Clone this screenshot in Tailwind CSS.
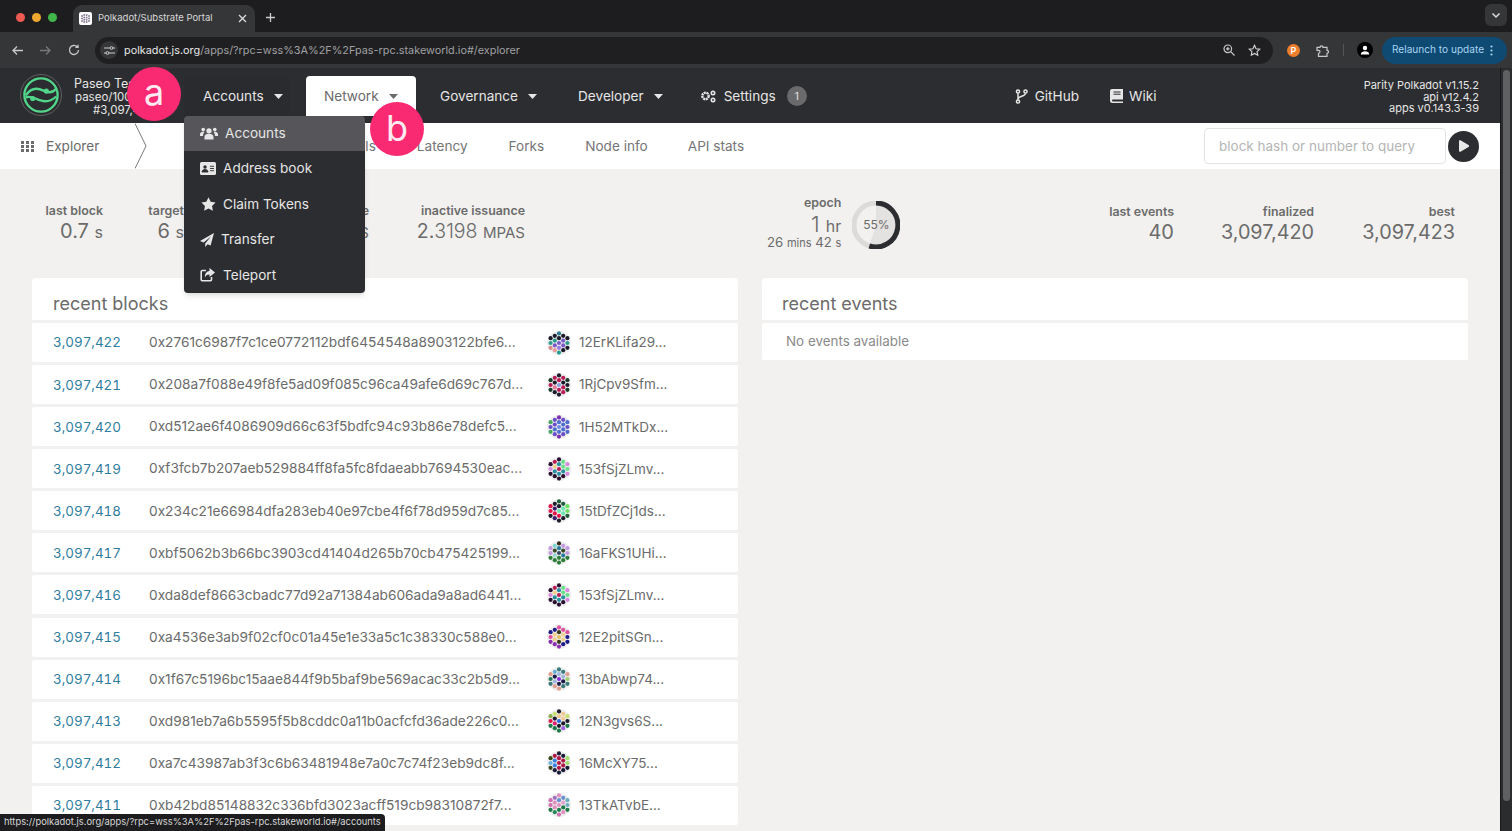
<!DOCTYPE html>
<html>
<head>
<meta charset="utf-8">
<title>Polkadot/Substrate Portal</title>
<script src="https://cdn.jsdelivr.net/npm/@tailwindcss/browser@4"></script>
</head>
<body class="h-[831px] w-[1512px] overflow-hidden bg-[#f2f1ef] font-['Inter',sans-serif] text-[13.6px] text-[#6b6b6b]">
<div class="relative flex h-[831px] w-[1512px] flex-col overflow-hidden">
  <!-- tab strip -->
  <div class="flex h-[32px] shrink-0 items-end bg-[#1d1d1f] pl-[13px]">
    <div class="mb-[10px] flex w-[60px] gap-[7px] pl-[3px]">
      <span class="h-[9px] w-[9px] rounded-full bg-[#ed5a52]"></span>
      <span class="h-[9px] w-[9px] rounded-full bg-[#eea72e]"></span>
      <span class="h-[9px] w-[9px] rounded-full bg-[#3fb54a]"></span>
    </div>
    <div class="flex h-[27px] w-[182px] items-center rounded-t-[9px] bg-[#353638] pl-[6px] pr-[8px]">
      <span class="flex h-[13px] w-[13px] items-center justify-center rounded-[2px] bg-white"><svg width="11" height="11" viewBox="0 0 11 11" fill="#8a7f94"><circle cx="2" cy="3" r="1"/><circle cx="2" cy="5.5" r="1"/><circle cx="2" cy="8" r="1"/><circle cx="4.2" cy="2" r="1"/><circle cx="4.2" cy="4.4" r="1"/><circle cx="4.2" cy="6.7" r="1"/><circle cx="4.2" cy="9" r="1"/><circle cx="6.6" cy="2" r="1"/><circle cx="6.6" cy="4.4" r="1"/><circle cx="6.6" cy="6.7" r="1"/><circle cx="6.6" cy="9" r="1"/><circle cx="9" cy="3" r="1"/><circle cx="9" cy="5.5" r="1"/><circle cx="9" cy="8" r="1"/></svg></span>
      <span class="ml-[6px] flex-1 whitespace-nowrap text-[9.5px] text-[#d8d8d8]">Polkadot/Substrate Portal</span>
      <svg width="9" height="9" viewBox="0 0 9 9" stroke="#ddd" stroke-width="1.3"><path d="M1 1l7 7M8 1l-7 7"/></svg>
    </div>
    <svg class="mb-[9px] ml-[10px]" width="11" height="11" viewBox="0 0 11 11" stroke="#ccc" stroke-width="1.3"><path d="M5.5 1v9M1 5.5h9"/></svg>
    <div class="mb-[6px] ml-auto mr-[5px] flex h-[22px] w-[22px] items-center justify-center rounded-[6px] bg-[#353638]">
      <svg width="10" height="7" viewBox="0 0 10 7" fill="none" stroke="#ddd" stroke-width="1.5"><path d="M1.5 1.5L5 5l3.5-3.5"/></svg>
    </div>
  </div>
  <!-- toolbar -->
  <div class="flex h-[36px] shrink-0 items-center bg-[#353638] pl-[11px] pr-[4px]">
    <svg width="13" height="11" viewBox="0 0 13 11" fill="none" stroke="#c9c9c9" stroke-width="1.3"><path d="M12 5.5H2M6 1.5l-4 4 4 4"/></svg>
    <svg class="ml-[15px]" width="13" height="11" viewBox="0 0 13 11" fill="none" stroke="#77787a" stroke-width="1.3"><path d="M1 5.5h10M7 1.5l4 4-4 4"/></svg>
    <svg class="ml-[16px]" width="12" height="12" viewBox="0 0 12 12" fill="none" stroke="#c9c9c9" stroke-width="1.3"><path d="M10.5 6a4.5 4.5 0 1 1-1.3-3.2M10 .8v2.6H7.4"/></svg>
    <div class="ml-[15px] flex h-[27px] w-[1178px] items-center rounded-full bg-[#1f1f21] pl-[5px] pr-[12px]">
      <span class="flex h-[18px] w-[18px] items-center justify-center rounded-full bg-[#353638]"><svg width="11" height="9" viewBox="0 0 11 9" fill="none" stroke="#ccc" stroke-width="1"><path d="M0 2h6M9 2h2M0 7h2M5 7h6"/><circle cx="7.5" cy="2" r="1.4"/><circle cx="3.5" cy="7" r="1.4"/></svg></span>
      <span class="ml-[6px] whitespace-nowrap text-[10.85px] text-[#9fa0a2]"><span class="text-[#e8e8e8]">polkadot.js.org</span>/apps/?rpc=wss%3A%2F%2Fpas-rpc.stakeworld.io#/explorer</span>
      <svg class="ml-auto" width="12" height="12" viewBox="0 0 12 12" fill="none" stroke="#c9c9c9" stroke-width="1.2"><circle cx="4.8" cy="4.8" r="3.8"/><path d="M7.7 7.7L11.5 11.5M3 4.8h3.6M4.8 3v3.6"/></svg>
      <svg class="ml-[13px]" width="13" height="13" viewBox="0 0 24 24" fill="none" stroke="#d8d8d8" stroke-width="2"><path d="M12 2.5l2.9 6.2 6.8.8-5 4.6 1.3 6.7-6-3.4-6 3.4 1.3-6.7-5-4.6 6.8-.8z"/></svg>
    </div>
    <span class="ml-[14px] flex h-[13px] w-[13px] items-center justify-center rounded-full bg-[#ee7d2c] text-[9px] font-semibold leading-none text-white">P</span>
    <svg class="ml-[16px]" width="13" height="13" viewBox="0 0 13 13" fill="none" stroke="#c9c9c9" stroke-width="1.2"><path d="M1 3h3a1.5 1.5 0 0 1 3 0h4v3a1.5 1.5 0 0 1 0 3v3H2.5V9a1.5 1.5 0 0 0 0-3H1z" transform="translate(0 .3)"/></svg>
    <span class="ml-[14px] h-[12px] w-px bg-[#555]"></span>
    <span class="ml-[13px] flex h-[16px] w-[16px] items-center justify-center rounded-full bg-black"><svg width="10" height="10" viewBox="0 0 10 10" fill="#fff"><circle cx="5" cy="3" r="2.2"/><path d="M.8 9.5c0-2.4 2-3.2 4.2-3.2s4.2.8 4.2 3.2z"/></svg></span>
    <div class="ml-[9px] flex h-[27px] w-[125px] items-center rounded-full bg-[#0f4a73] pl-[10px] text-[#a8d4f2]">
      <span class="whitespace-nowrap text-[10.1px]">Relaunch to update</span>
      <svg class="ml-[6px]" width="3" height="11" viewBox="0 0 3 11" fill="#a8d4f2"><circle cx="1.5" cy="1.5" r="1.1"/><circle cx="1.5" cy="5.5" r="1.1"/><circle cx="1.5" cy="9.5" r="1.1"/></svg>
    </div>
  </div>
  <div class="flex min-h-0 flex-1">
    <div class="flex min-w-0 flex-1 flex-col">
      <!-- app nav -->
      <div class="flex h-[55px] shrink-0 items-end bg-[#2c2d30] text-[#e6e6e6]">
        <div class="mb-[6px] ml-[20px] flex items-center self-end">
          <svg width="42" height="42" viewBox="0 0 43 43" fill="none"><circle cx="21.5" cy="21.5" r="21" stroke="#777" stroke-width=".7"/><circle cx="21.5" cy="21.5" r="17" stroke="#52d68a" stroke-width="2.4"/><path d="M6 22c5-8 12-8 18-5 4 2 9 3 13-2M6 24c5-2 9 1 15 3 6 2 11 1 16-4" stroke="#52d68a" stroke-width="2.4"/><circle cx="27" cy="17.5" r="2.6" fill="#52d68a"/><circle cx="13" cy="25" r="2.6" fill="#52d68a"/></svg>
          <div class="ml-[12px] w-[70px] whitespace-nowrap pt-[4px] text-[11.5px] leading-[13px]"><div class="text-[12.5px] leading-[15px]">Paseo Testnet</div><div class="pl-[1px]">paseo/1003</div><div class="pl-[19px]">#3,097,423</div></div>
        </div>
        <div class="ml-[40px] flex h-[47px] w-[105px] items-center gap-[10px] rounded-t-[4px] bg-[#2a2b2e] pb-[7px] pl-[19px]">Accounts <svg width="9" height="5" viewBox="0 0 9 5" fill="#e6e6e6"><path d="M0 0h9L4.5 5z"/></svg></div>
        <div class="mb-[7px] ml-[17px] flex h-[40px] w-[110px] items-center gap-[10px] rounded-t-[4px] bg-white pl-[18px] text-[#6b6b6b]">Network <svg width="9" height="5" viewBox="0 0 9 5" fill="#6b6b6b"><path d="M0 0h9L4.5 5z"/></svg></div>
        <div class="mb-[7px] ml-[24px] flex h-[40px] items-center gap-[10px]">Governance <svg width="9" height="5" viewBox="0 0 9 5" fill="#e6e6e6"><path d="M0 0h9L4.5 5z"/></svg></div>
        <div class="mb-[7px] ml-[41px] flex h-[40px] items-center gap-[10px]">Developer <svg width="9" height="5" viewBox="0 0 9 5" fill="#e6e6e6"><path d="M0 0h9L4.5 5z"/></svg></div>
        <div class="mb-[7px] ml-[37px] flex h-[40px] items-center">
          <svg width="17" height="13" viewBox="0 0 17 13" fill="#e6e6e6"><circle cx="5.5" cy="6" r="3.2" fill="none" stroke="#e6e6e6" stroke-width="2.4" stroke-dasharray="2 .6"/><circle cx="13" cy="3" r="1.7" fill="none" stroke="#e6e6e6" stroke-width="1.6"/><circle cx="13" cy="10" r="1.7" fill="none" stroke="#e6e6e6" stroke-width="1.6"/></svg>
          <span class="ml-[7px]">Settings</span>
          <span class="ml-[11px] flex h-[20px] w-[20px] items-center justify-center rounded-full bg-[#6a6a6c] text-[10px] text-[#e6e6e6]">1</span>
        </div>
        <div class="mb-[7px] ml-[208px] flex h-[40px] items-center">
          <svg width="13" height="15" viewBox="0 0 13 15" fill="none" stroke="#e6e6e6" stroke-width="1.5"><circle cx="3" cy="2.5" r="1.6"/><circle cx="3" cy="12.5" r="1.6"/><circle cx="10.5" cy="2.5" r="1.6"/><path d="M3 4.2v6.6M10.5 4.2c0 3.5-7.5 2.5-7.5 6"/></svg>
          <span class="ml-[7px]">GitHub</span>
        </div>
        <div class="mb-[7px] ml-[31px] flex h-[40px] items-center">
          <svg width="13" height="14" viewBox="0 0 13 14" fill="#e6e6e6"><path d="M2 0h11v10.5H3a1 1 0 0 0 0 2h10V14H2.5A2.5 2.5 0 0 1 0 11.5V2a2 2 0 0 1 2-2z"/><path d="M3.5 3h7M3.5 5.2h7" stroke="#2c2d30" stroke-width="1"/></svg>
          <span class="ml-[6px]">Wiki</span>
        </div>
        <div class="mb-[8px] ml-auto mr-[21px] text-right text-[11px] leading-[11.7px]"><div>Parity Polkadot v1.15.2</div><div>api v12.4.2</div><div>apps v0.143.3-39</div></div>
      </div>
      <!-- sub nav -->
      <div class="flex h-[46px] shrink-0 items-center bg-white pl-[21px] pr-[21px] text-[#757575]">
        <svg width="14" height="11" viewBox="0 0 14 11" fill="#6b6b6b"><path d="M0 0h3v3H0zM5 0h3v3H5zM10 0h3v3h-3zM0 4h3v3H0zM5 4h3v3H5zM10 4h3v3h-3zM0 8h3v3H0zM5 8h3v3H5zM10 8h3v3h-3z"/></svg>
        <span class="ml-[11px] text-[#6b6b6b]">Explorer</span>
        <svg class="ml-[36px]" width="13" height="46" viewBox="0 0 13 45" fill="none" stroke="#555" stroke-width=".8"><path d="M0 0l11 22.5L0 45"/></svg>
        <span class="ml-[146px]">Block details</span>
        <span class="ml-[41px]">Latency</span>
        <span class="ml-[41px]">Forks</span>
        <span class="ml-[41px]">Node info</span>
        <span class="ml-[40px]">API stats</span>
        <span class="ml-auto flex h-[36px] w-[242px] items-center rounded-[4px] border border-[#e3e3e3] pl-[14px] text-[13.5px] text-[#b5b5b5]">block hash or number to query</span>
        <span class="ml-[2px] flex h-[31px] w-[31px] items-center justify-center rounded-full bg-[#2c2d30]"><svg width="11" height="12" viewBox="0 0 11 12" fill="#e8e8e8"><path d="M1 1.2v9.6a1 1 0 0 0 1.5.9l8-4.8a1 1 0 0 0 0-1.8l-8-4.8A1 1 0 0 0 1 1.2z"/></svg></span>
      </div>
      <!-- summary -->
      <div class="flex h-[109px] shrink-0 items-center pl-[32px] pr-[45px]">
        <div class="w-[71px] text-right"><div class="text-[12.4px] font-semibold leading-[16px]">last block</div><div class="text-[20px] leading-[24px]">0.7 <span class="text-[16px]">s</span></div></div>
        <div class="ml-[10px] w-[71px] text-right"><div class="text-[12.4px] font-semibold leading-[16px]">target</div><div class="text-[20px] leading-[24px]">6 <span class="text-[16px]">s</span></div></div>
        <div class="ml-[10px] w-[175px] text-right"><div class="text-[12.4px] font-semibold leading-[16px]">total issuance</div><div class="text-[19.5px] leading-[24px]">1.5 <span class="text-[15px]">MPAS</span></div></div>
        <div class="ml-[10px] w-[146px] text-right"><div class="text-[12.4px] font-semibold leading-[16px]">inactive issuance</div><div class="text-[19.5px] leading-[24px]">2.<span class="font-light">3198</span> <span class="text-[15px]">MPAS</span></div></div>
        <div class="mb-[2px] ml-[242px] text-right"><div class="mb-[4px] text-[12.4px] font-semibold leading-[14px]">epoch</div><div class="text-[22px] font-light leading-[20px]">1 <span class="text-[16px] font-normal">hr</span></div><div class="text-[13.2px] leading-[13px]">26 <span class="text-[11px]">mins</span> 42 <span class="text-[11px]">s</span></div></div>
        <div class="relative ml-[11px] mt-[2px] h-[48px] w-[48px]">
          <svg width="48" height="48" viewBox="0 0 48 48" fill="none"><circle cx="24" cy="24" r="22" stroke="#dcdbd9" stroke-width="5"/><path d="M24 24V2A22 22 0 1 1 17.3 45z" fill="#e3e2e0" stroke="none"/><path d="M24 2A22 22 0 1 1 17.3 45" stroke="#2c2d30" stroke-width="5"/></svg>
          <span class="absolute inset-0 flex items-center justify-center text-[12px]">55%</span>
        </div>
        <div class="ml-auto w-[90px] text-right"><div class="text-[12.4px] font-semibold leading-[16px]">last events</div><div class="text-[20px] leading-[24px]">40</div></div>
        <div class="ml-[40px] w-[100px] text-right"><div class="text-[12.4px] font-semibold leading-[16px]">finalized</div><div class="text-[19.8px] leading-[24px]">3,097,420</div></div>
        <div class="ml-[41px] w-[100px] text-right"><div class="text-[12.4px] font-semibold leading-[16px]">best</div><div class="text-[19.8px] leading-[24px]">3,097,423</div></div>
      </div>
      <!-- tables -->
      <div class="flex gap-[24px] pl-[32px] pr-[32px]">
        <div class="w-[706px] shrink-0">
          <div class="mb-[3px] flex h-[42px] items-center rounded-t-[4px] bg-white pl-[21px] pt-[10px] text-[18px] leading-[24px]">recent blocks</div>
          <div class="flex flex-col gap-[3.09px]">
            <div class="flex h-[39px] items-center rounded-[2px] bg-white pl-[21px]"><span class="w-[96px] text-[13.4px] tabular-nums text-[#2f7d9e]">3,097,422</span><span class="w-[398px] whitespace-nowrap text-[13.7px]">0x2761c6987f7c1ce0772112bdf6454548a8903122bfe6...</span><svg data-i="0" class="identicon" width="24" height="24" viewBox="0 0 24 24"></svg><span class="ml-[8px] text-[13.5px]">12ErKLifa29...</span></div>
            <div class="flex h-[39px] items-center rounded-[2px] bg-white pl-[21px]"><span class="w-[96px] text-[13.4px] tabular-nums text-[#2f7d9e]">3,097,421</span><span class="w-[398px] whitespace-nowrap text-[13.7px]">0x208a7f088e49f8fe5ad09f085c96ca49afe6d69c767d...</span><svg data-i="1" class="identicon" width="24" height="24" viewBox="0 0 24 24"></svg><span class="ml-[8px] text-[13.5px]">1RjCpv9Sfm...</span></div>
            <div class="flex h-[39px] items-center rounded-[2px] bg-white pl-[21px]"><span class="w-[96px] text-[13.4px] tabular-nums text-[#2f7d9e]">3,097,420</span><span class="w-[398px] whitespace-nowrap text-[13.7px]">0xd512ae6f4086909d66c63f5bdfc94c93b86e78defc5...</span><svg data-i="2" class="identicon" width="24" height="24" viewBox="0 0 24 24"></svg><span class="ml-[8px] text-[13.5px]">1H52MTkDx...</span></div>
            <div class="flex h-[39px] items-center rounded-[2px] bg-white pl-[21px]"><span class="w-[96px] text-[13.4px] tabular-nums text-[#2f7d9e]">3,097,419</span><span class="w-[398px] whitespace-nowrap text-[13.7px]">0xf3fcb7b207aeb529884ff8fa5fc8fdaeabb7694530eac...</span><svg data-i="3" class="identicon" width="24" height="24" viewBox="0 0 24 24"></svg><span class="ml-[8px] text-[13.5px]">153fSjZLmv...</span></div>
            <div class="flex h-[39px] items-center rounded-[2px] bg-white pl-[21px]"><span class="w-[96px] text-[13.4px] tabular-nums text-[#2f7d9e]">3,097,418</span><span class="w-[398px] whitespace-nowrap text-[13.7px]">0x234c21e66984dfa283eb40e97cbe4f6f78d959d7c85...</span><svg data-i="4" class="identicon" width="24" height="24" viewBox="0 0 24 24"></svg><span class="ml-[8px] text-[13.5px]">15tDfZCj1ds...</span></div>
            <div class="flex h-[39px] items-center rounded-[2px] bg-white pl-[21px]"><span class="w-[96px] text-[13.4px] tabular-nums text-[#2f7d9e]">3,097,417</span><span class="w-[398px] whitespace-nowrap text-[13.7px]">0xbf5062b3b66bc3903cd41404d265b70cb475425199...</span><svg data-i="5" class="identicon" width="24" height="24" viewBox="0 0 24 24"></svg><span class="ml-[8px] text-[13.5px]">16aFKS1UHi...</span></div>
            <div class="flex h-[39px] items-center rounded-[2px] bg-white pl-[21px]"><span class="w-[96px] text-[13.4px] tabular-nums text-[#2f7d9e]">3,097,416</span><span class="w-[398px] whitespace-nowrap text-[13.7px]">0xda8def8663cbadc77d92a71384ab606ada9a8ad6441...</span><svg data-i="3" class="identicon" width="24" height="24" viewBox="0 0 24 24"></svg><span class="ml-[8px] text-[13.5px]">153fSjZLmv...</span></div>
            <div class="flex h-[39px] items-center rounded-[2px] bg-white pl-[21px]"><span class="w-[96px] text-[13.4px] tabular-nums text-[#2f7d9e]">3,097,415</span><span class="w-[398px] whitespace-nowrap text-[13.7px]">0xa4536e3ab9f02cf0c01a45e1e33a5c1c38330c588e0...</span><svg data-i="6" class="identicon" width="24" height="24" viewBox="0 0 24 24"></svg><span class="ml-[8px] text-[13.5px]">12E2pitSGn...</span></div>
            <div class="flex h-[39px] items-center rounded-[2px] bg-white pl-[21px]"><span class="w-[96px] text-[13.4px] tabular-nums text-[#2f7d9e]">3,097,414</span><span class="w-[398px] whitespace-nowrap text-[13.7px]">0x1f67c5196bc15aae844f9b5baf9be569acac33c2b5d9...</span><svg data-i="7" class="identicon" width="24" height="24" viewBox="0 0 24 24"></svg><span class="ml-[8px] text-[13.5px]">13bAbwp74...</span></div>
            <div class="flex h-[39px] items-center rounded-[2px] bg-white pl-[21px]"><span class="w-[96px] text-[13.4px] tabular-nums text-[#2f7d9e]">3,097,413</span><span class="w-[398px] whitespace-nowrap text-[13.7px]">0xd981eb7a6b5595f5b8cddc0a11b0acfcfd36ade226c0...</span><svg data-i="8" class="identicon" width="24" height="24" viewBox="0 0 24 24"></svg><span class="ml-[8px] text-[13.5px]">12N3gvs6S...</span></div>
            <div class="flex h-[39px] items-center rounded-[2px] bg-white pl-[21px]"><span class="w-[96px] text-[13.4px] tabular-nums text-[#2f7d9e]">3,097,412</span><span class="w-[398px] whitespace-nowrap text-[13.7px]">0xa7c43987ab3f3c6b63481948e7a0c7c74f23eb9dc8f...</span><svg data-i="9" class="identicon" width="24" height="24" viewBox="0 0 24 24"></svg><span class="ml-[8px] text-[13.5px]">16McXY75...</span></div>
            <div class="flex h-[39px] items-center rounded-[2px] bg-white pl-[21px]"><span class="w-[96px] text-[13.4px] tabular-nums text-[#2f7d9e]">3,097,411</span><span class="w-[398px] whitespace-nowrap text-[13.7px]">0xb42bd85148832c336bfd3023acff519cb98310872f7...</span><svg data-i="10" class="identicon" width="24" height="24" viewBox="0 0 24 24"></svg><span class="ml-[8px] text-[13.5px]">13TkATvbE...</span></div>
          </div>
        </div>
        <div class="w-[706px] shrink-0">
          <div class="mb-[3px] flex h-[42px] items-center rounded-t-[4px] bg-white pl-[20px] pt-[10px] text-[18px] leading-[24px]">recent events</div>
          <div class="flex h-[37px] items-center rounded-[2px] bg-white pl-[24px] text-[13.4px] text-[#8a8a8a]">No events available</div>
        </div>
      </div>
    </div>
    <!-- scrollbar strip -->
    <div class="flex w-[12px] shrink-0 justify-center border-l border-[#1a1a1c] bg-[#2b2c2e] pt-[2px]"><div class="h-[731px] w-[7px] rounded-full bg-[#5f6062]"></div></div>
  </div>

  <!-- dropdown menu -->
  <div class="absolute left-[184px] top-[116px] w-[181px] overflow-hidden rounded-[4px] bg-[#2c2d30] text-[#e6e6e6] shadow-md">
    <div class="flex h-[35px] items-center bg-[#56565a] pl-[16px]"><svg width="18" height="13" viewBox="0 0 18 13" fill="#e6e6e6"><circle cx="9" cy="3.8" r="2.6"/><circle cx="3.2" cy="2.6" r="1.8"/><circle cx="14.8" cy="2.6" r="1.8"/><path d="M4.5 12.5V10c0-2 2-3.2 4.5-3.2s4.5 1.2 4.5 3.2v2.5zM0 9V7c0-1.3 1.3-2.3 3-2.3.6 0 1 .1 1.4.3-.8.8-1.3 1.8-1.4 4zM18 9V7c0-1.3-1.3-2.3-3-2.3-.6 0-1 .1-1.4.3.8.8 1.3 1.8 1.4 4z"/></svg><span class="ml-[7px]">Accounts</span></div>
    <div class="flex h-[35px] items-center pl-[16px]"><svg width="16" height="13" viewBox="0 0 16 13"><rect width="16" height="13" rx="1.6" fill="#e6e6e6"/><circle cx="5" cy="5" r="1.7" fill="#2c2d30"/><path d="M2 10c0-1.6 1.4-2.5 3-2.5s3 .9 3 2.5zM10 4.3h4M10 6.5h4M10 8.7h4" fill="#2c2d30" stroke="#2c2d30" stroke-width=".9"/></svg><span class="ml-[7px]">Address book</span></div>
    <div class="flex h-[36px] items-center pl-[17px]"><svg width="15" height="14" viewBox="0 0 24 23" fill="#e6e6e6"><path d="M12 .5l3.6 7.3 8 1.2-5.8 5.6 1.4 8-7.2-3.8-7.2 3.8 1.4-8L.4 9l8-1.2z"/></svg><span class="ml-[7px]">Claim Tokens</span></div>
    <div class="flex h-[35px] items-center pl-[16px]"><svg width="14" height="14" viewBox="0 0 14 14" fill="#e6e6e6"><path d="M14 0L0 8l3.6 1.5L11 3.5 5.2 10.5V14l2.4-2.8 3 1.3z"/></svg><span class="ml-[7px]">Transfer</span></div>
    <div class="flex h-[36px] items-center pl-[16px]"><svg width="15" height="14" viewBox="0 0 15 14" fill="none"><path d="M6 2.5H2.2a1 1 0 0 0-1 1v8.3a1 1 0 0 0 1 1h8.3a1 1 0 0 0 1-1V9" stroke="#e6e6e6" stroke-width="1.6"/><path d="M9.5 0L15 4.5 9.5 9V6.5C7 6.5 5.5 7.5 5 9.5 4.6 6 6.5 3 9.5 3z" fill="#e6e6e6"/></svg><span class="ml-[8px]">Teleport</span></div>
  </div>
  <!-- annotations -->
  <div class="absolute left-[127px] top-[67px] flex h-[54px] w-[54px] items-center justify-center rounded-full bg-[#f92a72] pb-[5px] text-[36px] text-[#ffeaf1]">a</div>
  <div class="absolute left-[370px] top-[102px] flex h-[54px] w-[54px] items-center justify-center rounded-full bg-[#f92a72] pb-[3px] text-[36px] text-[#ffeaf1]">b</div>
  <!-- status bubble -->
  <div class="absolute bottom-0 left-0 flex h-[17px] w-[385px] items-center whitespace-nowrap rounded-tr-[4px] bg-[#1d1d1f] pl-[4px] text-[9.35px] text-[#d8d8d8]">https://polkadot.js.org/apps/?rpc=wss%3A%2F%2Fpas-rpc.stakeworld.io#/accounts</div>
</div>
<script>
  // Identicon dot colours (data), column by column.
  var P=[
    ['#1b1b2b','#2a9d8f','#d98a8a','#1b1b2b','#2a9d8f','#7b5bc9','#e89a9a','#2f7d8f','#1b1b2b','#7b5bc9','#9a7be0','#2a9d8f','#1b1b2b','#7b5bc9','#7b5bc9','#1b1b2b','#1b1b2b','#2a9d8f','#1b1b2b'],
    ['#1a3d2b','#b81d55','#1a3d2b','#b81d55','#1b1b2b','#e37a9a','#1b1b2b','#1b1b2b','#b81d55','#8aa0e0','#b81d55','#1b1b2b','#b81d55','#1b1b2b','#b81d55','#b81d55','#1a3d2b','#1b1b2b','#1a3d2b'],
    ['#4aa860','#6a4fc9','#4aa860','#6a4fc9','#6a4fc9','#4f6ed0','#6a4fc9','#7a2fb0','#4f6ed0','#6f8be0','#4f6ed0','#7a2fb0','#6a4fc9','#4f6ed0','#4f6ed0','#6a4fc9','#4f6ed0','#6a4fc9','#4f6ed0'],
    ['#2a1030','#d98ae0','#2a1030','#b81d55','#f0cf8a','#2a8fa0','#2a1030','#2a1030','#2a8fa0','#b81d55','#2a8fa0','#2a1030','#6ae08a','#6ae08a','#2a8fa0','#2a1030','#d98ae0','#6ae08a','#d98ae0'],
    ['#e0184a','#e0184a','#1b1b2b','#1b1b2b','#3a1a6a','#e0184a','#3a1a6a','#1f5f3a','#1b1b2b','#6ae8b0','#e0184a','#1b1b2b','#1f5f3a','#6ae8b0','#6ae8b0','#1b1b2b','#6ae060','#6ae060','#1f5f3a'],
    ['#c49ae0','#c49ae0','#2f7d3a','#7ad8d0','#3a4a2a','#9ad8d0','#2f7d3a','#3a2a1a','#2a7d9a','#3a4a6a','#2f7d3a','#2f7d3a','#c49ae0','#3a4a2a','#2a7d9a','#2f7d3a','#c49ae0','#c49ae0','#2f7d3a'],
    ['#1b1b8a','#e050a0','#8a2fb0','#1b1b8a','#f0d090','#f0d090','#8a2fb0','#e050a0','#3a3a1a','#e0c060','#3a3a1a','#8a2fb0','#e050a0','#f0d090','#f0d090','#1b1b8a','#e050a0','#1b1b8a','#1b1b8a'],
    ['#e0a090','#2a7a5a','#3a7a7a','#6ab0d0','#1b1b4a','#a0b8e0','#e0a090','#3a7a7a','#a0b8e0','#8a2fe0','#1b1b4a','#e0a090','#3a7a7a','#a0b8e0','#1b1b4a','#3a7a7a','#e0a090','#a0d070','#3a7a7a'],
    ['#8ab04a','#e0184a','#1f7a4a','#c8e070','#1b1b2b','#e02070','#1f7a4a','#1b1b2b','#f0c890','#2a6ae0','#1b1b2b','#1f7a4a','#f0c890','#f0c890','#1b1b2b','#a060e0','#c8e070','#1b1b2b','#1f7a4a'],
    ['#3a4a1a','#6ab0e0','#3a4a1a','#b01848','#3a80e0','#3a80e0','#1b1b3a','#1b1b3a','#b01848','#b01848','#b01848','#1b1b3a','#1b1b3a','#b01848','#b01848','#1b1b3a','#a0e070','#a0e070','#1b1b3a'],
    ['#d070b0','#d070b0','#1f7a4a','#a070c0','#e090c0','#e090c0','#2a8a5a','#e090c0','#6a90d0','#e090c0','#1f7a4a','#d070b0','#6a90d0','#e0a0d0','#1f7a4a','#e090c0','#6ab0c0','#6ab0c0','#1f7a4a']
  ];
  var cols=[[-8.4,3],[-4.2,4],[0,5],[4.2,4],[8.4,3]];
  document.querySelectorAll('svg.identicon').forEach(function(s){
    var c=P[+s.dataset.i],n=0,h='<circle cx="12" cy="12" r="12" fill="#eeeeee"/>';
    cols.forEach(function(col){
      for(var j=0;j<col[1];j++){
        var y=12+(j-(col[1]-1)/2)*4.8;
        h+='<circle cx="'+(12+col[0])+'" cy="'+y+'" r="2.1" fill="'+c[n++]+'"/>';
      }
    });
    s.innerHTML=h;
  });
</script>
</body>
</html>
